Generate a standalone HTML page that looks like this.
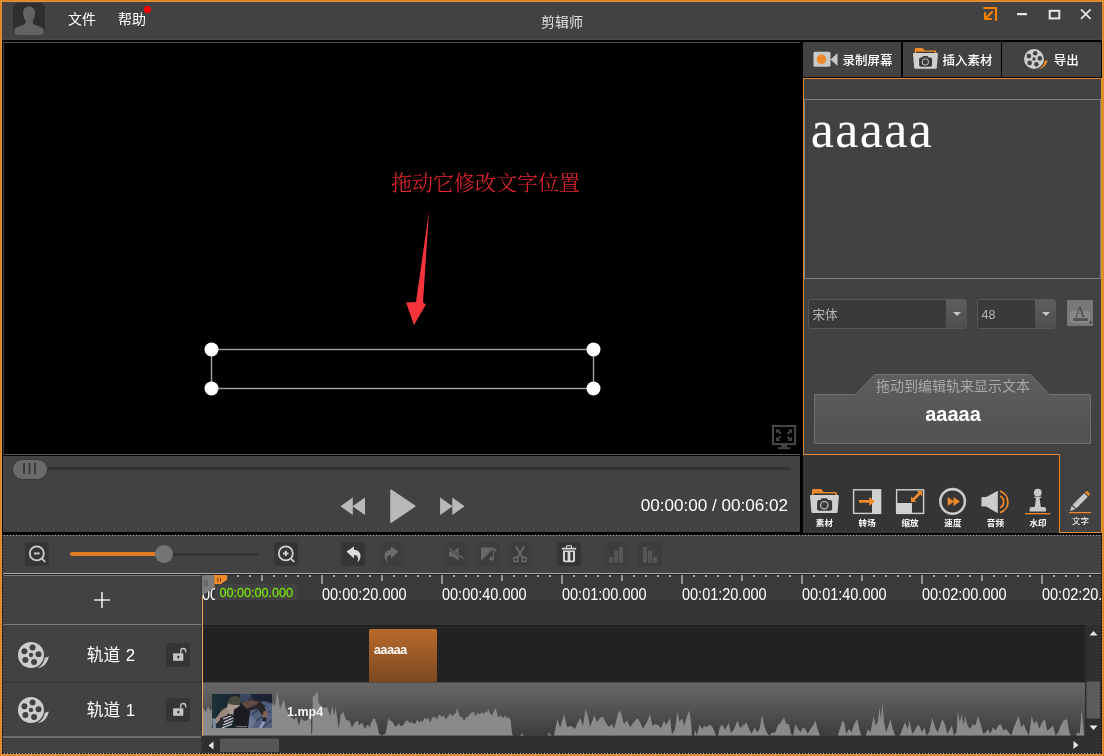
<!DOCTYPE html>
<html lang="zh-CN">
<head>
<meta charset="utf-8">
<title>剪辑师</title>
<style>
*{box-sizing:border-box;margin:0;padding:0}
html,body{width:1104px;height:756px;overflow:hidden;background:#000}
body{position:relative;will-change:transform;font-family:"Liberation Sans","Noto Sans CJK SC",sans-serif;color:#fff;font-size:14px}
.abs{position:absolute}
#frame{position:absolute;left:0;top:0;width:1104px;height:756px;border:1px solid #d9872e;box-shadow:inset 0 0 0 1px #e8912f;pointer-events:none;z-index:50}
#title{left:2px;top:2px;width:1100px;height:38px;background:linear-gradient(#424242 0 37px,#4a4a4a 37px)}
#title .menu{position:absolute;top:6.700px;font-size:14px;line-height:20px;color:#fff}
#video{left:3px;top:42px;width:797px;height:413px;background:#000;border:1px solid #4c4c4c;border-left-color:#3c3c3c;border-bottom-color:#585858;border-right:none}
#ctrl{left:3px;top:456px;width:797px;height:75.500px;background:#424242}
#rp{left:803px;top:42px;width:299px;height:491px;background:#424242}
.topbtn{position:absolute;top:0;height:35px;background:#424242;font-size:13px;line-height:35px;color:#fff;white-space:nowrap}
#tools{left:803px;top:455px;width:256px;height:77.500px;background:#353535}
.tool{position:absolute;top:62.600px;font-size:8.500px;line-height:10px;font-weight:bold;color:#fff;width:40px;text-align:center;letter-spacing:0.200px;text-indent:0.200px}
#tb{left:2px;top:535px;width:1100px;height:38px;background:#424242}
.b24{position:absolute;top:7px;width:24px;height:24px;background:#353535;border-radius:2px}
.b24.dis{background:#3d3d3d}
#tl{left:2px;top:574px;width:1100px;height:179px;background:#353535}
.rl{position:absolute;top:11.300px;font-size:16px;line-height:18px;transform:scaleX(.905);transform-origin:0 0;color:#fff;white-space:nowrap}
.dd{position:absolute;top:257px;height:30px;background:#3a3a3a;border:1px solid #575757;border-radius:3px;font-size:12.600px;line-height:28px;color:#b4b4b4;overflow:hidden}
.dd span{position:absolute;left:3.500px;top:0.700px}
.dd i{position:absolute;right:0;top:0;width:20px;height:28px;background:linear-gradient(#5e5e5e,#4e4e4e)}
.dd i:after{content:"";position:absolute;left:6.500px;top:12px;border:4px solid transparent;border-top:4.500px solid #c8c8c8;border-bottom:none}
</style>
</head>
<body>
<svg width="0" height="0" style="position:absolute"><defs>
<g id="folder"><path d="M2 7V1.500Q2 0 3.500 0H11.300L13.400 3H25.500Q27 3 27 4.500V7z" fill="#ee8a2c"/><path d="M3.600 4.400H25.300V7H3.600z" fill="#383838"/><path d="M0 7.100Q0 5.900 1.100 5.900H27.900Q29 5.900 28.900 7.100L27.600 23Q27.500 24.100 26.400 24.100H2.600Q1.500 24.100 1.400 23z" fill="#cfcfcf"/><rect x="7.100" y="10.900" width="15" height="10.900" rx="2" fill="#393939"/><path d="M10.300 11.200l1.300-2h5.400l1.300 2z" fill="#393939"/><circle cx="14.300" cy="16.200" r="3.700" fill="none" stroke="#cfcfcf" stroke-width="1.100"/></g>
<g id="reelc"><path d="M19.250 26.200Q28.700 24.800 30.900 14.400L26.900 15.700A14.200 14.200 0 0 1 19.250 26.200z" fill="currentColor"/><circle cx="13" cy="13" r="13" fill="#cdcdcd"/><g fill="#424242"><circle cx="13" cy="13" r="2.200"/><circle cx="14.58" cy="5.57" r="3"/><circle cx="20.56" cy="12.21" r="3"/><circle cx="16.09" cy="19.94" r="3"/><circle cx="7.35" cy="18.09" r="3"/><circle cx="6.42" cy="9.20" r="3"/></g></g>
</defs></svg>
<!-- TITLE BAR -->
<div id="title" class="abs">
  <svg class="abs" style="left:11px;top:1px" width="32" height="32" viewBox="0 0 32 32"><defs><filter id="ab" x="-10%" y="-10%" width="120%" height="120%"><feGaussianBlur stdDeviation="0.600"/></filter><clipPath id="ac"><rect width="32" height="32" rx="5"/></clipPath></defs><rect width="32" height="32" rx="5" fill="#2e2e2e"/><g clip-path="url(#ac)"><g filter="url(#ab)" fill="#636363"><path d="M16.100 3.600c3.600 0 6 2.600 6 6.400c0 3-1 5.500-2.400 7.500v3h-7.200v-3c-1.400-2-2.400-4.500-2.400-7.500c0-3.800 2.400-6.400 6-6.400z"/><path d="M12.500 19.500h7.200c.5 2 2.500 2.600 5.300 3.400c3.500 1 5.800 2 5.800 4.600v1.500q0 3.500-3.500 3.500h-22.400q-3.500 0-3.500-3.500v-1.500c0-2.600 2.300-3.600 5.800-4.600c2.800-.8 4.800-1.400 5.300-3.400z"/></g></g></svg>
  <div class="menu" style="left:66px">文件</div>
  <div class="menu" style="left:116px">帮助</div>
  <div class="abs" style="left:142px;top:4px;width:7px;height:7px;border-radius:50%;background:#f00"></div>
  <div class="abs" style="left:539px;top:10px;font-size:14px;line-height:20px;color:#e0e0e0">剪辑师</div>
  <svg class="abs" style="left:980px;top:1px" width="116" height="20" viewBox="0 0 116 20">
    <path d="M2.200 5H14V17" fill="none" stroke="#ff8200" stroke-width="2.100" stroke-linejoin="round" stroke-linecap="round"/>
    <path d="M3 9.300V16H9.800" fill="none" stroke="#ff8200" stroke-width="2.100" stroke-linejoin="round"/>
    <path d="M10 9L3.500 15.500" fill="none" stroke="#ff8200" stroke-width="2.300" stroke-linecap="round"/>
    <rect x="35" y="10" width="10" height="2.200" fill="#e6e6e6"/>
    <rect x="67.700" y="7.800" width="9.600" height="7.600" fill="none" stroke="#e6e6e6" stroke-width="2"/>
    <path d="M99 6.300l9.600 9.600M108.600 6.300l-9.600 9.600" stroke="#e6e6e6" stroke-width="1.700" fill="none"/>
  </svg>
</div>

<!-- VIDEO -->
<div id="video" class="abs">
  <div class="abs" style="left:387px;top:126px;font-family:'Liberation Serif','Noto Serif CJK SC',serif;font-size:21px;line-height:28px;color:#f0262c;white-space:nowrap;font-weight:300">拖动它修改文字位置</div>
  <svg class="abs" style="left:390px;top:160px" width="50" height="130" viewBox="393 202 50 130"><path d="M428 210L422 301.500L425 303.500L413 324L405 301.500L415 301z" fill="#f6343c"/></svg>
  <svg class="abs" style="left:196px;top:297px" width="410" height="60" viewBox="200 340 410 60"><rect x="211.500" y="349.500" width="382" height="39" fill="none" stroke="#a2a2a2" stroke-width="1.400"/><g fill="#fff"><circle cx="211.500" cy="349.500" r="7"/><circle cx="593.500" cy="349.500" r="7"/><circle cx="211.500" cy="388.500" r="7"/><circle cx="593.500" cy="388.500" r="7"/></g></svg>
  <svg class="abs" style="left:768px;top:381.800px" width="26" height="26" viewBox="0 0 26 26"><rect x="1" y="1" width="22.100" height="18.100" fill="none" stroke="#484848" stroke-width="2"/><rect x="9.200" y="20" width="5.800" height="2.400" fill="#484848"/><rect x="6" y="22.200" width="12.200" height="1.900" fill="#484848"/><g fill="#484848"><path d="M4.100 4.400h4.200l-1.300 1.300l2.400 2.400l-1.300 1.300l-2.400-2.400l-1.600 1.600z"/><path d="M20 4.400v4.200l-1.300-1.300l-2.400 2.400l-1.300-1.300l2.400-2.400l-1.600-1.600z"/><path d="M4.100 16.100v-4.200l1.300 1.300l2.400-2.400l1.300 1.300l-2.400 2.400l1.600 1.600z"/><path d="M20 16.100h-4.200l1.300-1.300l-2.400-2.400l1.300-1.300l2.400 2.400l1.600-1.600z"/></g></svg>
</div>

<!-- PLAYBACK CONTROLS -->
<div id="ctrl" class="abs">
  <div class="abs" style="left:44px;top:11px;width:742px;height:3px;background:#333"></div>
  <div class="abs" style="left:8.500px;top:2.7px;width:36.500px;height:21px;border-radius:10.500px;background:#6a6a6a;border:1px solid #383838"></div>
  <div class="abs" style="left:20px;top:7px;width:1.500px;height:11px;background:#3a3a3a;box-shadow:5.500px 0 0 #3a3a3a,11px 0 0 #3a3a3a"></div>
  <svg class="abs" style="left:336px;top:32px" width="130" height="36" viewBox="339 488 130 36"><g fill="#b9b9b9"><path d="M340.500 506.300L352.800 497.500v17.600zM352.500 506.300L365 497.500v17.600z"/><path d="M391 490.200L414.800 506.200L391 522.200z" stroke="#b9b9b9" stroke-width="1.500" stroke-linejoin="round"/><path d="M464.600 506.300L452.300 497.500v17.600zM452.600 506.300L440.100 497.500v17.600z"/></g></svg>
  <div class="abs" style="left:637.800px;top:39.3px;font-size:17.100px;line-height:22px;color:#fff;white-space:nowrap">00:00:00 / 00:06:02</div>
</div>

<!-- RIGHT PANEL -->
<div id="rp" class="abs">
  <div class="abs" style="left:0;top:0;width:299px;height:36px;background:#000"></div>
  <div class="topbtn" style="left:0;width:98.400px">
    <svg class="abs" style="left:10px;top:9px" width="26" height="17" viewBox="0 0 26 17"><rect x="0.500" y="0.800" width="17" height="15" rx="1.500" fill="#c9c9c9"/><path d="M17.500 8.500L24.500 2v13z" fill="#c9c9c9"/><circle cx="8.500" cy="8.300" r="4.800" fill="#ee8a2c"/></svg>
    <span class="abs" style="left:39.500px;top:1.500px;font-weight:500;font-size:12.500px">录制屏幕</span>
  </div>
  <div class="topbtn" style="left:100px;width:97.700px">
    <svg class="abs" style="left:10px;top:6.300px" width="25" height="21.300" viewBox="0 0 29 24.700"><use href="#folder"/></svg>
    <span class="abs" style="left:39.500px;top:1.500px;font-weight:500;font-size:12.500px">插入素材</span>
  </div>
  <div class="topbtn" style="left:199.200px;width:98.800px">
    <svg class="abs" style="left:22px;top:7px;color:#ee8a2c" width="24.600" height="21" viewBox="0 0 32 27.300"><use href="#reelc"/></svg>
    <span class="abs" style="left:51.500px;top:1.500px;font-weight:500;font-size:12.500px">导出</span>
  </div>
  <!-- orange outline -->
  <div class="abs" style="left:0;top:36px;width:299px;height:377px;border:1px solid #e08b33;border-bottom:none"></div>
  <div class="abs" style="left:0;top:412px;width:257px;height:1px;background:#e08b33"></div>
  <div class="abs" style="left:256px;top:412px;width:43px;height:79px;border:1px solid #e08b33;border-top:none;border-right:none"></div>
  <div class="abs" style="left:298px;top:412px;width:1px;height:79px;background:#e08b33"></div>
  <!-- text preview box -->
  <div class="abs" style="left:1px;top:57px;width:297px;height:180px;border:1px solid #808080">
    <div class="abs" style="left:5.800px;top:-0.500px;font-family:'Liberation Serif',serif;font-size:52px;line-height:60px;letter-spacing:1.400px;color:#fff">aaaaa</div>
  </div>
  <!-- dropdowns -->
  <div class="dd" style="left:5px;width:159px"><span>宋体</span><i></i></div>
  <div class="dd" style="left:174px;width:79px"><span>48</span><i></i></div>
  <div class="abs" style="left:264px;top:258px;width:26px;height:26px;background:#787878">
    <div class="abs" style="left:3px;top:11.300px;width:19.500px;height:11.400px;background:#878787"></div>
    <div class="abs" style="left:0;top:2.500px;width:26px;text-align:center;font-family:'Liberation Serif',serif;font-size:15.500px;line-height:18px;color:#4c4c4c">A</div>
    <div class="abs" style="left:6px;top:18.300px;width:15px;height:2.700px;background:#555"></div>
    <svg class="abs" style="left:21px;top:20px" width="5" height="5" viewBox="0 0 5 5"><path d="M1 1.500h3.400l-1.700 2.600z" fill="#3a3a3a"/></svg>
  </div>
  <!-- drag box -->
  <svg class="abs" style="left:10px;top:331px" width="280" height="72" viewBox="813 373 280 72">
    <defs><linearGradient id="gdb" x1="0" y1="0" x2="0" y2="1"><stop offset="0" stop-color="#5e5e5e"/><stop offset="1" stop-color="#515151"/></linearGradient></defs>
    <path d="M814.500 394.500H855.500L874.500 374.500H1030.500L1049.500 394.500H1090.500V443.500H814.500z" fill="url(#gdb)" stroke="#707070" stroke-width="1"/>
  </svg>
  <div class="abs" style="left:11px;top:334px;width:278px;text-align:center;font-size:14px;line-height:20px;color:#a9a9a9">拖动到编辑轨来显示文本</div>
  <div class="abs" style="left:11px;top:360px;width:278px;text-align:center;font-size:20px;line-height:24px;font-weight:bold;color:#fff">aaaaa</div>
</div>

<!-- TOOLS -->
<div id="tools" class="abs">
  <svg class="abs" style="left:0;top:30px" width="256" height="32" viewBox="803 485 256 32">
    <g transform="translate(810,489)"><use href="#folder"/></g>
    <!-- transition -->
    <rect x="853.600" y="489.800" width="27" height="23.600" fill="none" stroke="#d0d0d0" stroke-width="1.400"/>
    <rect x="872" y="489.800" width="8.600" height="23.600" fill="#d0d0d0"/>
    <path d="M859 500h10.300v-3.300l5.500 4.700l-5.500 4.700v-3.300h-10.300z" fill="#ee8a2c"/>
    <!-- zoom -->
    <rect x="896.600" y="489.800" width="27" height="23.600" fill="none" stroke="#d0d0d0" stroke-width="1.400"/>
    <rect x="896.600" y="503" width="15.400" height="10.400" fill="#d0d0d0"/>
    <path d="M911 502v-5.500l1.800 1.800l5.700-5.700l-1.800-1.800h5.500v5.500l-1.800-1.800l-5.700 5.700l1.800 1.800z" fill="#ee8a2c"/>
    <!-- speed -->
    <circle cx="952.600" cy="501.400" r="12.300" fill="none" stroke="#cbcbcb" stroke-width="2.600"/>
    <path d="M947.700 496.900l6.300 4.600l-6.300 4.600zM953.500 496.900l6.500 4.600l-6.500 4.600z" fill="#ee8a2c"/>
    <!-- audio -->
    <path d="M981.400 498.200q0-1.200 1.200-1.200h3.600l11.600-6.200v22.400l-11.600-6.600h-3.600q-1.200 0-1.200-1.200z" fill="#cbcbcb"/>
    <path d="M1000 491.200a11.200 11.200 0 0 1 0 21.400" fill="none" stroke="#ee8a2c" stroke-width="1.800"/>
    <path d="M1000 496a6.600 6.600 0 0 1 0 11.800" fill="none" stroke="#ee8a2c" stroke-width="1.800"/>
    <!-- stamp -->
    <circle cx="1037.800" cy="492.600" r="3.900" fill="#c9c9c9"/>
    <path d="M1034.300 496.800h7v1.200h-1.700l1.200 9h3.200q2 0 2 2v2.400h-16.400v-2.400q0-2 2-2h3.200l1.200-9h-1.700z" fill="#c9c9c9"/>
    <rect x="1025" y="513" width="25.400" height="1.300" fill="#ee8a2c"/>
  </svg>
  <div class="tool" style="left:1.4px">素材</div><div class="tool" style="left:44.2px">转场</div><div class="tool" style="left:87.0px">缩放</div><div class="tool" style="left:129.9px">速度</div><div class="tool" style="left:172.4px">音频</div><div class="tool" style="left:215.0px">水印</div>
</div>
<!-- text tab -->
<div class="abs" style="left:1060px;top:455px;width:41px;height:77px;background:#424242">
  <svg class="abs" style="left:6px;top:33px" width="30" height="28" viewBox="1066 488 30 28">
    <path d="M1070 511l1.700-5.300l3.600 3.600z" fill="#c9c9c9"/>
    <path d="M1072.600 504.800l11.600-11.600l3.600 3.600l-11.600 11.600z" fill="#c9c9c9"/>
    <path d="M1084.900 492.500l1.200-1.200q.7-.7 1.400 0l2.200 2.200q.7.700 0 1.400l-1.200 1.200z" fill="#ee8a2c"/>
    <rect x="1069" y="512" width="22" height="1.200" fill="#ee8a2c"/>
  </svg>
  <div class="abs" style="left:0;top:61px;width:41px;text-align:center;font-size:8.500px;line-height:10px;color:#fff">文字</div>
</div>
<!-- TOOLBAR -->
<div id="tb" class="abs">
  <div class="abs" style="left:0;top:0;width:1100px;height:1px;background:repeating-linear-gradient(90deg,#424242 0 2px,#adadad 2px 3px)"></div>
  <div class="b24" style="left:23px"><svg width="24" height="24" viewBox="25 542 24 24"><circle cx="36.800" cy="553.400" r="7" fill="none" stroke="#cfcfcf" stroke-width="1.800"/><path d="M42 558.600l3.200 3.400" stroke="#cfcfcf" stroke-width="1.800"/><rect x="34" y="552.500" width="5.600" height="1.900" fill="#cfcfcf"/></svg></div>
  <div class="abs" style="left:68px;top:17px;width:88px;height:4px;border-radius:2px;background:#dd7a22"></div>
  <div class="abs" style="left:168px;top:18px;width:88px;height:3px;background:#343434"></div>
  <div class="abs" style="left:152.500px;top:10px;width:18px;height:18px;border-radius:50%;background:#757575"></div>
  <div class="b24" style="left:272px"><svg width="24" height="24" viewBox="25 542 24 24"><circle cx="36.800" cy="553.400" r="7" fill="none" stroke="#cfcfcf" stroke-width="1.800"/><path d="M42 558.600l3.200 3.400" stroke="#cfcfcf" stroke-width="1.800"/><rect x="34" y="552.500" width="5.600" height="1.900" fill="#cfcfcf"/><rect x="35.850" y="550.600" width="1.900" height="5.600" fill="#cfcfcf"/></svg></div>
  <div class="b24" style="left:339px"><svg width="24" height="24" viewBox="0 0 24 24"><path d="M5.500 9.600L13 4.500v3.300q6.500.5 6.500 6.500q0 3.500-3.300 6q1.200-2 .9-4q-.5-3.200-4.100-3.300v3.400z" fill="#dcdcdc"/></svg></div>
  <div class="b24 dis" style="left:378px"><svg width="24" height="24" viewBox="0 0 24 24"><path d="M18.500 9.600L11 4.500v3.300q-6.500.5-6.500 6.500q0 3.500 3.300 6q-1.200-2-.9-4q.5-3.200 4.100-3.300v3.400z" fill="#6c6c6c"/></svg></div>
  <div class="b24 dis" style="left:442px"><svg width="24" height="24" viewBox="0 0 24 24"><path d="M5 9.500h4l5.500-4v13l-5.500-4h-4z" fill="#686868"/><path d="M5 6.500l14.500 10" stroke="#3d3d3d" stroke-width="2.600"/><path d="M5 6.500l14.500 10" stroke="#686868" stroke-width="1.200"/></svg></div>
  <div class="b24 dis" style="left:474px"><svg width="24" height="24" viewBox="0 0 24 24"><path d="M5 5.500h13.500L5 19z" fill="#686868"/><path d="M17.500 6.500v9.500" stroke="#686868" stroke-width="1.200"/><path d="M17.500 6.500q2.500 1 2.500 3.500" stroke="#686868" stroke-width="1.200" fill="none"/><ellipse cx="15.500" cy="16.800" rx="2.400" ry="1.900" fill="#686868"/></svg></div>
  <div class="b24 dis" style="left:506px"><svg width="24" height="24" viewBox="0 0 24 24"><path d="M8 4.500l7 12M16 4.500l-7 12" stroke="#6c6c6c" stroke-width="1.700" fill="none"/><circle cx="7.800" cy="17.500" r="2.200" fill="none" stroke="#6c6c6c" stroke-width="1.400"/><circle cx="16.200" cy="17.500" r="2.200" fill="none" stroke="#6c6c6c" stroke-width="1.400"/></svg></div>
  <div class="b24" style="left:555px"><svg width="24" height="24" viewBox="557 542 24 24"><path d="M566.500 548v-1.500q0-.7.700-.7h3.600q.7 0 .7.700v1.500" fill="none" stroke="#d8d8d8" stroke-width="1.100"/><rect x="561.800" y="547.800" width="14.400" height="1.700" fill="#d8d8d8"/><path d="M563 550.600h12v9.700q0 2-2 2h-8q-2 0-2-2z" fill="#d8d8d8"/><rect x="565" y="552" width="2.600" height="8.500" fill="#353535"/><rect x="570.400" y="552" width="2.600" height="8.500" fill="#353535"/></svg></div>
  <div class="b24 dis" style="left:602px"><svg width="24" height="24" viewBox="0 0 24 24"><g fill="#565656"><rect x="5" y="14.800" width="4" height="6"/><rect x="10" y="8.700" width="4" height="12.100"/><rect x="15" y="4.900" width="4" height="15.900"/></g></svg></div>
  <div class="b24 dis" style="left:636px"><svg width="24" height="24" viewBox="0 0 24 24"><g fill="#565656"><rect x="15" y="14.800" width="4" height="6"/><rect x="10" y="8.700" width="4" height="12.100"/><rect x="5" y="4.900" width="4" height="15.900"/></g></svg></div>
</div>
<!-- TIMELINE -->
<div class="abs" style="left:2px;top:573px;width:1100px;height:1px;background:#a8a8a8"></div>
<div class="abs" style="left:2px;top:574px;width:1100px;height:1px;background:#232323"></div>
<div id="tl" class="abs" style="top:575px;height:178px">
  <!-- ruler -->
  <div class="abs" style="left:200px;top:0;width:900px;height:25px;background:#3b3b3b;overflow:hidden">
  </div>
  <div class="abs" style="left:0;top:0;width:1100px;height:25px;overflow:hidden"><div class="rl" style="left:200px">00:00:00.000</div><div class="rl" style="left:320px">00:00:20.000</div><div class="rl" style="left:440px">00:00:40.000</div><div class="rl" style="left:560px">00:01:00.000</div><div class="rl" style="left:680px">00:01:20.000</div><div class="rl" style="left:800px">00:01:40.000</div><div class="rl" style="left:920px">00:02:00.000</div><div class="rl" style="left:1040px">00:02:20.000</div></div>
  <svg class="abs" style="left:0;top:0" width="1100" height="12" viewBox="2 575 1100 12"><path d="M214 575v2M226 575v2M238 575v2M250 575v2M274 575v2M286 575v2M298 575v2M310 575v2M334 575v2M346 575v2M358 575v2M370 575v2M394 575v2M406 575v2M418 575v2M430 575v2M454 575v2M466 575v2M478 575v2M490 575v2M514 575v2M526 575v2M538 575v2M550 575v2M574 575v2M586 575v2M598 575v2M610 575v2M634 575v2M646 575v2M658 575v2M670 575v2M694 575v2M706 575v2M718 575v2M730 575v2M754 575v2M766 575v2M778 575v2M790 575v2M814 575v2M826 575v2M838 575v2M850 575v2M874 575v2M886 575v2M898 575v2M910 575v2M934 575v2M946 575v2M958 575v2M970 575v2M994 575v2M1006 575v2M1018 575v2M1030 575v2M1054 575v2M1066 575v2M1078 575v2M1090 575v2" stroke="#c4c4c4" stroke-width="1.700" fill="none"/><path d="M262 575v6M382 575v6M502 575v6M622 575v6M742 575v6M862 575v6M982 575v6M202 575v9M322 575v9M442 575v9M562 575v9M682 575v9M802 575v9M922 575v9M1042 575v9" stroke="#b8b8b8" stroke-width="1.400" fill="none"/></svg>
  <div class="abs" style="left:213px;top:9px;width:82px;height:16px;background:#424242"></div>
  <div class="abs" style="left:217.500px;top:10px;font-size:12.700px;line-height:16px;letter-spacing:-0.050px;color:#78de10;-webkit-text-stroke:0.300px #78de10;white-space:nowrap">00:00:00.000</div>
  <!-- tracks bg -->
  <div class="abs" style="left:201px;top:50px;width:882px;height:3px;background:linear-gradient(#1f1f1f 0 2px,#2c2c2c 2px 3px)"></div>
  <div class="abs" style="left:201px;top:53px;width:882px;height:54px;background:#222"></div>
  <div class="abs" style="left:201px;top:107px;width:882px;height:54px;background:linear-gradient(#4a4a4a 0 1.300px,#666 1.300px,#5a5a5a 35%,#3c3c3c)"></div>
  <div class="abs" style="left:201px;top:161px;width:899px;height:17px;background:#2f2f2f"></div>
  <svg class="abs" style="left:201px;top:107px" width="882" height="54" viewBox="203 682 882 54"><path d="M203 735.6L203.0 708.0L206.0 712.0L208.0 706.0L210.0 711.0L212.0 709.0L272.0 706.0L273.3 702.3L275.0 706.7L277.2 691.0L280.0 709.0L283.8 699.0L285.6 708.0L287.4 712.0L290.0 716.0L294.0 719.7L296.5 717.0L299.0 725.5L301.0 718.0L304.0 721.0L307.7 720.0L310.6 715.0L311.4 734.5L312.2 734.0L312.8 696.5L315.3 695.0L317.5 690.0L318.5 703.0L320.7 705.0L323.6 708.0L327.2 707.0L330.1 716.0L332.3 706.0L334.1 716.0L335.6 707.0L338.8 729.0L340.6 715.0L343.2 711.7L346.0 719.7L349.7 721.0L352.0 728.0L353.0 725.7L354.0 724.0L355.0 721.4L356.0 722.8L357.0 720.5L358.0 720.9L359.0 725.0L360.0 724.8L361.0 723.3L362.0 723.0L363.4 725.1L364.8 729.0L365.9 727.2L367.0 725.0L368.0 724.8L369.0 726.3L370.0 727.0L371.0 722.7L372.0 722.0L373.0 718.9L374.0 719.3L375.0 718.0L376.0 723.0L377.0 724.0L378.0 728.5L379.0 734.5L380.0 734.0L381.0 734.9L382.0 735.6L383.0 734.8L384.0 734.4L385.0 734.5L386.0 731.5L387.0 726.0L388.0 720.0L389.0 718.0L390.0 721.5L391.0 719.9L392.0 722.0L393.0 722.2L394.0 724.6L395.0 727.0L396.0 725.7L397.0 725.9L398.0 724.0L399.0 723.2L400.0 725.3L401.0 726.0L402.0 726.0L403.0 724.9L404.0 724.6L405.0 721.1L406.0 722.0L407.1 720.1L408.2 720.8L409.4 723.2L410.5 722.0L411.7 722.6L412.8 722.7L414.0 724.0L415.0 723.8L416.0 722.1L417.0 720.3L418.0 720.0L419.0 722.3L420.0 722.3L421.0 720.5L422.0 722.0L423.0 721.0L424.0 719.1L425.0 717.0L426.0 719.6L427.0 719.2L428.0 718.0L429.0 718.3L430.0 722.8L431.0 721.0L432.0 717.7L433.0 717.6L434.0 716.0L435.0 718.6L436.0 716.6L437.0 719.0L438.0 717.9L439.0 714.3L440.0 715.0L441.2 716.3L442.3 717.0L443.5 715.5L444.7 717.0L445.8 719.4L447.0 718.0L448.0 715.7L449.0 716.0L450.0 713.0L451.0 714.8L452.0 715.7L453.0 716.0L454.0 714.1L455.0 714.1L456.0 712.6L457.0 708.0L458.0 711.2L459.0 714.0L460.0 716.7L461.0 717.0L462.4 716.9L463.7 720.6L464.9 720.1L466.0 717.0L467.0 717.1L468.0 717.8L469.0 714.0L470.0 715.6L471.0 712.6L472.0 713.0L473.0 712.1L474.0 711.7L475.0 715.0L476.0 716.0L477.0 712.4L478.0 713.0L479.0 713.9L480.0 714.5L481.0 712.4L482.0 713.0L483.0 712.4L484.0 715.0L485.0 711.6L486.0 712.0L487.0 712.4L488.0 709.5L489.0 710.2L490.0 714.0L491.0 714.1L492.0 716.0L493.0 713.3L494.0 711.0L495.5 708.0L497.0 713.0L498.0 717.2L499.0 717.0L500.0 714.7L501.0 716.0L502.0 717.1L503.0 718.0L504.0 717.1L505.0 715.0L506.0 718.0L507.0 716.5L508.0 718.7L509.0 717.0L510.5 720.0L512.0 733.0L513.0 735.6L520.0 735.6L522.0 733.5L523.5 735.6L548.0 735.6L549.0 732.0L550.5 735.0L552.0 735.6L554.0 735.6L557.5 719.0L560.0 728.0L564.0 714.0L567.0 727.0L571.5 726.0L575.0 729.0L578.0 722.0L580.3 718.0L583.0 726.0L585.5 709.0L588.0 716.0L590.0 727.0L594.3 715.5L597.0 722.0L600.0 718.0L603.0 716.8L606.0 723.0L609.0 727.0L612.0 724.0L614.0 729.0L618.9 710.4L621.0 713.0L624.0 724.0L627.0 720.6L630.0 727.0L634.0 722.0L637.4 718.0L640.0 722.0L643.0 728.5L647.0 722.0L650.0 714.2L652.5 726.0L655.0 724.0L658.0 725.0L661.0 728.0L664.0 720.6L666.0 725.0L670.0 718.0L672.0 734.5L675.0 729.0L677.5 711.7L679.5 722.0L682.0 718.0L684.0 726.0L687.0 716.0L689.4 710.4L691.0 722.0L692.0 735.6L694.0 735.6L695.5 730.0L697.0 735.6L699.5 724.4L702.0 729.0L704.0 726.0L707.0 727.0L710.0 724.4L713.0 728.0L716.0 735.6L718.0 735.6L720.0 727.0L722.3 724.4L725.0 730.0L728.7 723.0L731.0 733.0L734.0 729.0L737.6 720.6L740.0 728.0L742.0 726.0L745.2 721.9L741.6 728.9L743.9 725.6L746.5 722.4L749.1 728.9L751.7 733.8L754.7 727.3L757.0 732.2L759.6 728.9L762.2 714.2L764.1 725.6L766.7 732.2L769.3 735.4L772.6 732.2L775.2 732.8L777.8 725.6L780.8 722.4L784.0 717.5L786.3 724.0L788.9 724.0L790.9 733.8L793.1 735.4L795.4 724.0L798.0 728.9L800.6 732.2L802.9 727.3L805.2 728.9L807.8 733.8L810.4 728.9L813.0 725.6L815.6 720.8L817.6 728.9L819.9 735.4L837.8 735.4L839.8 728.9L842.4 720.8L844.3 722.4L846.3 733.8L848.9 728.9L851.5 732.2L854.1 724.0L857.4 719.1L859.3 728.9L861.3 735.4L865.9 735.4L867.8 728.9L870.4 732.2L873.7 715.9L875.6 725.6L877.6 722.4L879.6 707.7L880.9 719.1L882.5 702.8L884.1 722.4L886.1 732.2L888.4 725.6L890.6 719.1L892.6 728.9L895.2 735.4L899.8 735.4L902.4 728.9L905.0 722.4L907.6 728.9L909.5 720.8L912.2 733.8L914.8 730.5L917.4 725.6L919.3 725.6L921.9 732.2L924.5 727.3L926.5 735.4L929.1 732.2L932.4 717.5L935.0 727.3L937.6 732.2L940.2 725.6L942.2 719.1L944.8 724.0L947.4 733.8L950.0 728.9L951.9 725.6L953.9 735.4L956.5 732.2L957.8 711.0L959.8 722.4L961.7 714.2L963.7 725.6L965.0 715.9L967.6 725.6L970.2 728.9L972.8 724.0L975.4 725.6L978.0 715.9L980.6 724.0L983.2 733.8L985.8 732.2L987.8 728.9L990.4 733.8L993.0 727.3L995.6 730.5L998.2 725.6L1000.8 724.0L1003.4 730.5L1006.1 728.9L1008.7 732.2L1011.3 735.4L1013.2 728.9L1015.8 722.4L1018.8 715.9L1021.1 727.3L1023.7 724.0L1026.3 730.5L1028.9 735.4L1031.8 715.9L1034.1 724.0L1036.7 720.8L1039.3 728.9L1041.9 722.4L1044.9 719.1L1047.1 730.5L1049.7 728.9L1053.0 725.6L1055.6 735.4L1058.2 732.2L1060.8 725.6L1063.4 720.8L1067.0 719.1L1069.3 732.2L1070.6 735.4L1075.8 735.4L1077.8 732.2L1079.7 733.8L1081.7 709.3L1083.3 725.6L1084.0 735.4L1084 735.6 Z" fill="#8a8a8a"/></svg>
  <!-- clip -->
  <div class="abs" style="left:367px;top:53.500px;width:68px;height:53.700px;border-radius:2px 2px 0 0;background:linear-gradient(#b86a2a,#7c4921);font-size:12.300px;letter-spacing:-0.250px;font-weight:bold;line-height:14px;color:#fff"><span class="abs" style="left:5px;top:14.200px">aaaaa</span></div>
  <!-- thumb -->
  <svg class="abs" style="left:210px;top:119px" width="60" height="34" viewBox="0 0 60 34"><defs><filter id="bl" x="-10%" y="-10%" width="120%" height="120%"><feGaussianBlur stdDeviation="0.550"/></filter><clipPath id="tc"><rect width="60" height="34"/></clipPath><linearGradient id="tg" x1="0" y1="0" x2="1" y2="0"><stop offset="0" stop-color="#1c3139"/><stop offset=".22" stop-color="#1b2a31"/><stop offset=".4" stop-color="#1c2229"/><stop offset=".62" stop-color="#2c3448"/><stop offset="1" stop-color="#465270"/></linearGradient></defs><g clip-path="url(#tc)"><rect width="60" height="34" fill="url(#tg)"/><g filter="url(#bl)">
  <path d="M28 0h11l-3 7l-8 2z" fill="#3b4660"/><path d="M39 0h21v9l-8-2l-10 1z" fill="#1d2233"/>
  <path d="M38 17l14-9l8 3v23h-22z" fill="#55627f"/><path d="M40 20l14-9M44 27l14-10M50 34l10-8" stroke="#39425a" stroke-width="1.600"/><path d="M36 20l8 6l-4 8h-6z" fill="#6a7694"/>
  <path d="M29 8l9-2l9 1l5 4l3 10l-4 2l-5-8l-7 1l-6 6l-5-4z" fill="#2a262b"/>
  <path d="M30 8l10-2l7 2l-3 3l-8 3l-6 5z" fill="#5f4b45"/>
  <path d="M52 17l4 1l-1 6l-3 2l-2-4z" fill="#7d655c"/>
  <path d="M52 24l3 1l-5 9h-3z" fill="#8f9dbc"/><path d="M51 23l4 1l-1 4l-4-1z" fill="#26262c"/>
  <path d="M17 12l-7 4l-6 8l-3 4l3 2l5-5l5-3l4-4z" fill="#9a857c"/>
  <path d="M16 9l12 1l-1 8l-4 4l-6-2l-2-6z" fill="#a8978f"/><path d="M22 14l5 1l-1 6l-4 1z" fill="#8c7c80"/>
  <path d="M16 8q1-6 7-6q5 0 6 4l-1 5l-6 0l-5-1z" fill="#46483c"/>
  <path d="M22 16l8-6l8 8l-2 16h-12l-3-10z" fill="#1e1e24"/>
  <path d="M8 24l12-4l4 6l-12 8h-4z" fill="#2a2a30"/>
  <path d="M11 25l8-3M12 28l9-4M11 31l10-4M10 34l10-4" stroke="#d4d4dc" stroke-width="1.300"/>
  <path d="M0 25l3-1l1 10h-3z" fill="#7f8ea0"/>
  <path d="M24 32h11v1.200h-11z" fill="#6f6f78"/>
  </g></g></svg>
  <div class="abs" style="left:285px;top:129px;font-size:12.500px;font-weight:bold;line-height:16px;color:#f4f4f4">1.mp4</div>
  <!-- playhead flags -->
  <svg class="abs" style="left:198px;top:0" width="32" height="26" viewBox="200 575 32 26"><path d="M201.500 575h12.700v12.500l-12.700 8.500z" fill="#7b7b7b"/><path d="M204.500 580v7M207 580v7" stroke="#5a5a5a" stroke-width="1.100"/><path d="M214.200 575h13v4.600l-6.200 4.400h-6.800z" fill="#ee8a2c"/><path d="M217.800 578v3.800M220.500 578v3.800" stroke="#7a3f10" stroke-width="1.100"/><rect x="213.700" y="584" width="1" height="4" fill="#a8672c"/></svg>
  <!-- left header -->
  <div class="abs" style="left:0;top:0;width:199px;height:163px;background:#424242"></div>
  <div class="abs" style="left:0;top:0;width:199px;height:1px;background:#7a7a7a"></div>
  <div class="abs" style="left:199px;top:0;width:1px;height:178px;background:#333"></div>
  <div class="abs" style="left:200px;top:21px;width:1px;height:140px;background:#eaa865"></div>
  <svg class="abs" style="left:91px;top:16px" width="18" height="18" viewBox="0 0 18 18"><path d="M9 1v16M1 9h16" stroke="#e8e8e8" stroke-width="1.600"/></svg>
  <div class="abs" style="left:0;top:49px;width:199px;height:1.200px;background:#7c7c7c"></div>
  <div class="abs" style="left:0;top:50px;width:199px;height:57px">
    <svg class="abs" style="left:16px;top:16.750px;color:#cdcdcd" width="32" height="27.300" viewBox="0 0 32 27.300"><use href="#reelc"/></svg>
    <div class="abs" style="left:84.800px;top:19px;word-spacing:1px;font-size:16.700px;line-height:24px;color:#fff;white-space:nowrap">轨道 2</div>
    <div class="abs" style="left:164px;top:18px;width:24px;height:24px;border-radius:2px;background:#353535"><svg width="24" height="24" viewBox="0 0 24 24"><rect x="7.100" y="10.300" width="10.200" height="7.500" fill="#c4c4c4"/><rect x="11.400" y="12.800" width="2" height="2.500" fill="#353535"/><path d="M14.700 10.300v-2.300a2.500 2.500 0 0 1 5 0v1.500" fill="none" stroke="#c4c4c4" stroke-width="1.300"/></svg></div>
  </div>
  <div class="abs" style="left:0;top:106.200px;width:199px;height:1.600px;background:#393939"></div>
  <div class="abs" style="left:0;top:105px;width:199px;height:57px">
    <svg class="abs" style="left:16px;top:16.750px;color:#cdcdcd" width="32" height="27.300" viewBox="0 0 32 27.300"><use href="#reelc"/></svg>
    <div class="abs" style="left:84.800px;top:19px;word-spacing:1px;font-size:16.700px;line-height:24px;color:#fff;white-space:nowrap">轨道 1</div>
    <div class="abs" style="left:164px;top:18px;width:24px;height:24px;border-radius:2px;background:#353535"><svg width="24" height="24" viewBox="0 0 24 24"><rect x="7.100" y="10.300" width="10.200" height="7.500" fill="#c4c4c4"/><rect x="11.400" y="12.800" width="2" height="2.500" fill="#353535"/><path d="M14.700 10.300v-2.300a2.500 2.500 0 0 1 5 0v1.500" fill="none" stroke="#c4c4c4" stroke-width="1.300"/></svg></div>
  </div>
  <div class="abs" style="left:0;top:161px;width:199px;height:2px;background:#6e6e6e"></div>
  <div class="abs" style="left:0;top:163px;width:199px;height:15px;background:#424242"></div>
  <!-- scrollbars -->
  <div class="abs" style="left:1083px;top:50px;width:17px;height:111px;background:#2f2f2f"></div>
  <svg class="abs" style="left:1083px;top:50px" width="17" height="111" viewBox="1085 625 17 111"><path d="M1089.500 635.500h8l-4-4.500zM1089.500 725.500h8l-4 4.500z" fill="#e8e8e8"/><rect x="1086.500" y="681.500" width="13.500" height="37" rx="1.500" fill="#5c5c5c"/></svg>
  <svg class="abs" style="left:201px;top:161px" width="899" height="17" viewBox="203 736 899 17"><path d="M213.500 741.500v8l-5-4zM1073.500 741v8l5-4z" fill="#e8e8e8"/><rect x="220" y="738.500" width="59" height="13.500" rx="1.500" fill="#565656"/></svg>
</div>
<div class="abs" style="left:2px;top:536px;width:1px;height:217px;background:repeating-linear-gradient(180deg,#0e0e0e 0 2px,#484848 2px 3px);z-index:40"></div>
<div class="abs" style="left:1101px;top:536px;width:1px;height:217px;background:repeating-linear-gradient(180deg,#0e0e0e 0 2px,#484848 2px 3px);z-index:40"></div>
<div class="abs" style="left:2px;top:753px;width:1100px;height:1px;background:repeating-linear-gradient(90deg,#15181e 0 2px,#b4b4b4 2px 3px);z-index:40"></div>
<div id="frame"></div>
</body>
</html>
